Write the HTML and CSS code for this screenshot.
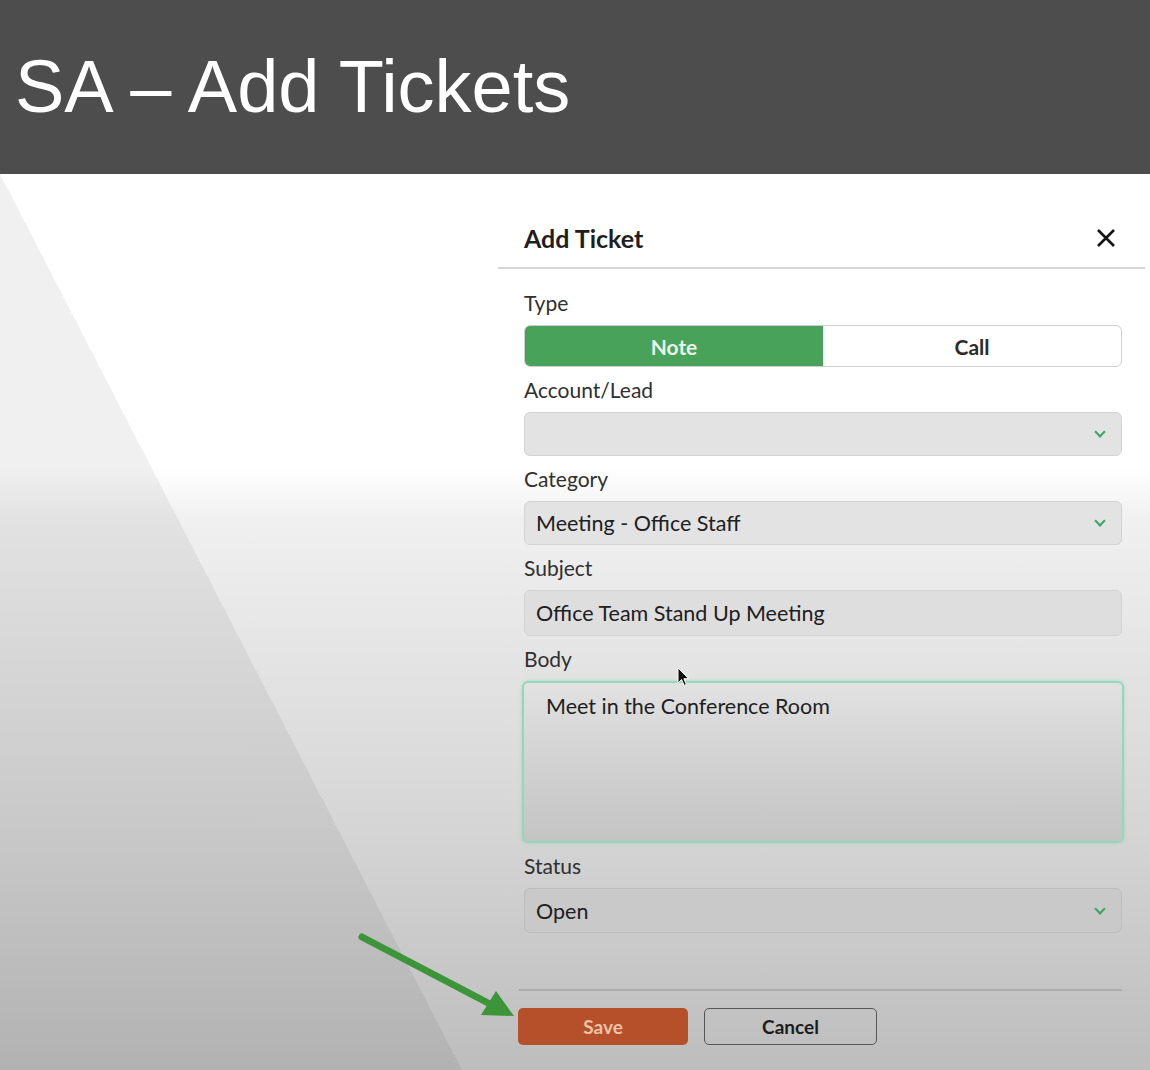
FILE: index.html
```html
<!DOCTYPE html>
<html lang="en">
<head>
    <meta charset="UTF-8">
    <meta name="viewport" content="width=device-width, initial-scale=1.0">
    <title>SA - Add Tickets</title>
    <link rel="stylesheet" href="styles.css">
</head>
<body>
    <header class="slide-title">
        <h1>SA – Add Tickets</h1>
    </header>

    <main class="stage">
        <!-- pointer arrow drawn on the slide -->
        <svg class="callout" viewBox="0 0 175 105" width="175" height="105">
            <line x1="12" y1="17" x2="140" y2="84" stroke="#3c9639" stroke-width="7" stroke-linecap="round"/>
            <polygon points="146,71 131,95 164,96" fill="#3c9639"/>
        </svg>

        <section class="modal">
            <div class="modal-head">
                <h2>Add Ticket</h2>
                <button class="close" aria-label="Close">
                    <svg viewBox="0 0 20 20" width="20" height="20">
                        <path d="M2 2 L18 18 M18 2 L2 18" stroke="#141414" stroke-width="2.6" fill="none"/>
                    </svg>
                </button>
            </div>

            <form class="modal-body">
                <div class="field">
                    <label>Type</label>
                    <div class="toggle">
                        <button type="button" class="on">Note</button>
                        <button type="button">Call</button>
                    </div>
                </div>

                <div class="field">
                    <label>Account/Lead</label>
                    <div class="select"><span></span><i class="chev"></i></div>
                </div>

                <div class="field">
                    <label>Category</label>
                    <div class="select"><span>Meeting - Office Staff</span><i class="chev"></i></div>
                </div>

                <div class="field">
                    <label>Subject</label>
                    <div class="input">Office Team Stand Up Meeting</div>
                </div>

                <div class="field">
                    <label>Body</label>
                    <div class="textarea">Meet in the Conference Room</div>
                    <svg class="cursor" viewBox="0 0 13 20" width="13" height="20">
                        <path d="M1 1 L1 16 L4.6 12.6 L7.2 18.4 L9.4 17.4 L6.9 11.8 L11.6 11.6 Z" fill="#111" stroke="#fff" stroke-width="1"/>
                    </svg>
                </div>

                <div class="field">
                    <label>Status</label>
                    <div class="select dim"><span>Open</span><i class="chev"></i></div>
                </div>
            </form>

            <div class="modal-foot">
                <button class="btn save">Save</button>
                <button class="btn cancel">Cancel</button>
            </div>
        </section>
    </main>
</body>
</html>
```

FILE: styles.css
```css
body {
    margin: 0;
    width: 1150px;
    height: 1070px;
    overflow: hidden;
    font-family: Lato, "Open Sans", sans-serif;
}

.slide-title {
    height: 174px;
    background-color: #4d4d4d;
    display: flex;
    align-items: center;
}

.slide-title h1 {
    margin: 0 0 0 15px;
    padding-bottom: 2px;
    font-family: "Liberation Sans", Arial, sans-serif;
    font-weight: normal;
    font-size: 74px;
    color: #fff;
}

.stage {
    position: relative;
    height: 896px;
    display: flex;
    justify-content: flex-end;
    padding-right: 5px;
    box-sizing: border-box;
    background-color: #fff;
    background-image:
        linear-gradient(to bottom, rgba(0,0,0,0) 292px, rgba(0,0,0,0.06) 346px, rgba(0,0,0,0.17) 666px, rgba(0,0,0,0.26) 100%),
        linear-gradient(to top right, #f0f0f0 50%, rgba(255,255,255,0) 50%);
    background-size: 100% 100%, 462px 100%;
    background-repeat: no-repeat;
}

.callout {
    position: absolute;
    left: 350px;
    top: 746px;
}

.modal {
    width: 647px;
    margin-top: 35px;
}

.modal-head {
    height: 58px;
    display: flex;
    align-items: center;
    justify-content: space-between;
    padding: 0 29px 0 26px;
    border-bottom: 2px solid #d6d6d6;
}

.modal-head h2 {
    margin: 0;
    font-size: 25px;
    font-weight: bold;
    color: #1e1e1e;
}

.close {
    border: none;
    background: none;
    padding: 0;
    display: flex;
}

.modal-body {
    padding: 11px 23px 0 26px;
}

.field {
    position: relative;
    margin-top: 11px;
}

.field label {
    display: block;
    line-height: 24px;
    margin-bottom: 10px;
    font-size: 21px;
    color: #303030;
}

.toggle {
    display: flex;
    height: 42px;
    box-sizing: border-box;
    border: 1px solid #cfcfcf;
    border-radius: 6px;
    overflow: hidden;
    background-color: #fff;
}

.toggle button {
    flex: 1;
    border: none;
    background: none;
    font-family: inherit;
    font-size: 21px;
    font-weight: bold;
    color: #2b2b2b;
}

.toggle .on {
    background-color: #49a259;
    color: #e9f6ea;
}

.select,
.input {
    height: 44px;
    box-sizing: border-box;
    display: flex;
    align-items: center;
    justify-content: space-between;
    padding: 0 17px 0 11px;
    background-color: #e3e3e3;
    border: 1px solid #d3d3d3;
    border-radius: 6px;
    font-size: 21.5px;
    color: #202020;
}

.input {
    height: 46px;
    background-color: #dedede;
}

.select.dim {
    height: 45px;
    background-color: #c9c9c9;
    border-color: #bdbdbd;
}

.chev {
    width: 6px;
    height: 6px;
    border-right: 2.5px solid #38a565;
    border-bottom: 2.5px solid #38a565;
    transform: translateY(-2px) rotate(45deg);
}

.textarea {
    height: 162px;
    margin: 2px -2px 0;
    box-sizing: border-box;
    padding: 10px 22px;
    border: 2px solid #93d8bb;
    border-radius: 6px;
    box-shadow: 0 0 3px rgba(120, 210, 170, 0.6);
    background-image: linear-gradient(to bottom, #e2e2e2, #d6d6d6 35%, #c4c4c4);
    font-size: 21.5px;
    color: #1e1e1e;
}

.cursor {
    position: absolute;
    left: 153px;
    top: 20px;
}

.modal-foot {
    margin: 56px 23px 0 21px;
    padding-top: 17px;
    border-top: 2px solid #adadad;
    display: flex;
    gap: 16px;
}

.btn {
    width: 170px;
    height: 37px;
    border-radius: 5px;
    font-family: inherit;
    font-size: 19px;
    font-weight: bold;
}

.save {
    margin-left: -1px;
    border: none;
    background-color: #b5502a;
    color: #f0c3a9;
}

.cancel {
    width: 173px;
    border: 1.5px solid #575757;
    background: none;
    color: #1c1c1c;
}
```
